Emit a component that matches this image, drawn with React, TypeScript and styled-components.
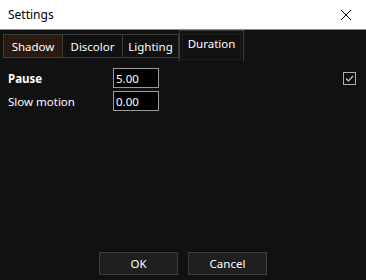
import React from "react";
import styled, { createGlobalStyle } from "styled-components";

const GlobalStyle = createGlobalStyle`
  html, body {
    margin: 0;
    padding: 0;
    background: #111111;
  }
  body {
    font-family: "Noto Sans", "Open Sans", sans-serif;
    font-size: 11px;
  }
`;

const Window = styled.div`
  width: 366px;
  height: 280px;
  display: flex;
  flex-direction: column;
  background: #111111;
  overflow: hidden;
`;

const TitleBar = styled.div`
  height: 29px;
  flex: 0 0 29px;
  background: #ffffff;
  border-bottom: 1px solid #8a8a8a;
  display: flex;
  align-items: center;
  justify-content: space-between;
  padding: 0 8px 0 8px;
  color: #000;
  font-size: 12px;
`;

const CloseButton = styled.div`
  width: 20px;
  height: 20px;
  display: flex;
  align-items: center;
  justify-content: center;
  margin-right: 2px;
`;

const TabStrip = styled.div`
  display: flex;
  align-items: flex-end;
  height: 31px;
  padding-left: 3px;
`;

const Tab = styled.div<{ $selected?: boolean; $tint?: boolean; $w: number }>`
  box-sizing: border-box;
  width: ${(p) => p.$w}px;
  height: ${(p) => (p.$selected ? "31px" : "24px")};
  margin-bottom: ${(p) => (p.$selected ? "0" : "3px")};
  padding: ${(p) => (p.$selected ? "3px 2px 1px" : "0 0 0 0")};
  display: flex;
  align-items: ${(p) => (p.$selected ? "stretch" : "center")};
  justify-content: center;
  border: 1px solid #3c3c3c;
  border-left: ${(p) => (p.$selected ? "1px solid #3c3c3c" : "none")};
  border-bottom: ${(p) => (p.$selected ? "none" : "1px solid #3c3c3c")};
  background: ${(p) => (p.$tint ? "#2a1a0f" : "#111111")};
  color: #ffffff;
  font-size: 11.5px;

  &:first-child {
    border-left: 1px solid #3c3c3c;
  }
`;

const FocusRect = styled.span`
  flex: 1;
  display: flex;
  justify-content: center;
  padding-top: 1px;
  border: 1px dotted #262626;
`;

const Content = styled.div`
  flex: 1;
  position: relative;
  padding: 7px 10px 0 8px;
  display: flex;
  flex-direction: column;
  gap: 3px;
`;

const Row = styled.div`
  display: flex;
  align-items: center;
  height: 20px;
`;

const Label = styled.div<{ $bold?: boolean }>`
  width: 105px;
  color: #ffffff;
  font-weight: ${(p) => (p.$bold ? 700 : 400)};
  font-size: 11.5px;
`;

const Field = styled.div`
  box-sizing: border-box;
  width: 46px;
  height: 20px;
  border: 1px solid #9a9a9a;
  background: #000000;
  color: #ffffff;
  padding: 0 2px;
  display: flex;
  align-items: center;
  font-size: 11.5px;
`;

const CheckBox = styled.div`
  position: absolute;
  right: 10px;
  top: 11px;
  box-sizing: border-box;
  width: 13px;
  height: 13px;
  border: 1px solid #b0b0b0;
  display: flex;
  align-items: center;
  justify-content: center;
`;

const Footer = styled.div`
  display: flex;
  justify-content: center;
  gap: 10px;
  padding: 0 0 5px 0;
`;

const Button = styled.div`
  box-sizing: border-box;
  width: 79px;
  height: 23px;
  border: 1px solid #3c3c3c;
  background: #1f1f1f;
  color: #ffffff;
  display: flex;
  align-items: center;
  justify-content: center;
  font-size: 11.5px;
`;

const tabs = [
  { name: "Shadow", w: 60 },
  { name: "Discolor", w: 60 },
  { name: "Lighting", w: 56 },
];

export default function App() {
  return (
    <Window>
      <GlobalStyle />
      <TitleBar>
        <span>Settings</span>
        <CloseButton>
          <svg width="12" height="12" viewBox="0 0 12 12">
            <path d="M1 1L11 11M11 1L1 11" stroke="#000" strokeWidth="1" />
          </svg>
        </CloseButton>
      </TitleBar>
      <TabStrip>
        {tabs.map((t, i) => (
          <Tab key={t.name} $w={t.w} $tint={i === 0}>
            {t.name}
          </Tab>
        ))}
        <Tab $selected $w={65}>
          <FocusRect>Duration</FocusRect>
        </Tab>
      </TabStrip>
      <Content>
        <Row>
          <Label $bold>Pause</Label>
          <Field>5.00</Field>
        </Row>
        <Row>
          <Label>Slow motion</Label>
          <Field>0.00</Field>
        </Row>
        <CheckBox>
          <svg width="11" height="11" viewBox="0 0 11 11">
            <path d="M2 5.5L4.5 8L9 3" stroke="#c8c8c8" strokeWidth="1.2" fill="none" />
          </svg>
        </CheckBox>
      </Content>
      <Footer>
        <Button>OK</Button>
        <Button>Cancel</Button>
      </Footer>
    </Window>
  );
}
